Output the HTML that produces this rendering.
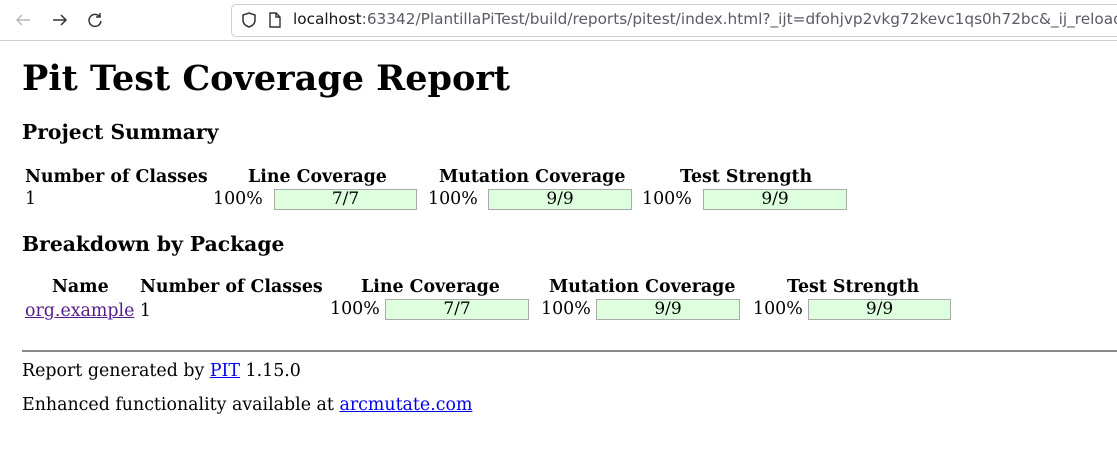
<!DOCTYPE html>
<html><head><style>
html,body{overflow:hidden}
body{margin:0;width:1117px;height:455px;background:#fff;font-family:"DejaVu Serif","Liberation Serif",serif;color:#000;position:relative;overflow:hidden}
.a{position:absolute;white-space:nowrap}
.chrome{position:absolute;left:0;top:0;width:1117px;height:40px;background:#fff;border-bottom:1px solid #cfcfd8;overflow:hidden}
.url{position:absolute;left:231px;top:4px;width:900px;height:31px;border:1px solid #cfcfd8;border-radius:5px;background:#fff}
.ut{position:absolute;left:293px;top:10px;width:824px;overflow:hidden;font-family:"DejaVu Sans","Liberation Sans",sans-serif;font-size:15.3px;color:#5b5b66;white-space:nowrap}
.b{font-weight:bold;font-size:17.4px}
.t{font-size:17.4px}
.bar{position:absolute;height:19px;background:#ddffdd;border:1px solid #aaa;text-align:center;font-size:17px;line-height:19px}
a{color:#0000ee;text-decoration:underline}
</style></head><body>
<div class="chrome">
<svg class="a" style="left:14px;top:11px" width="18" height="18" viewBox="0 0 18 18"><path d="M16 9H3M8 4L3 9l5 5" stroke="#b8b8bd" stroke-width="1.5" fill="none"/></svg>
<svg class="a" style="left:51px;top:11px" width="18" height="18" viewBox="0 0 18 18"><path d="M2 9h13M10 4l5 5-5 5" stroke="#333" stroke-width="1.5" fill="none"/></svg>
<svg class="a" style="left:86px;top:11px" width="18" height="18" viewBox="0 0 18 18"><path d="M14 6A6 6 0 1 0 15 10M14 2v4h-4" stroke="#333" stroke-width="1.5" fill="none"/></svg>
<div class="url"></div>
<svg class="a" style="left:240px;top:11px" width="18" height="18" viewBox="0 0 18 18"><path d="M9 2l6 2v5c0 4-3 6-6 7-3-1-6-3-6-7V4z" stroke="#333" stroke-width="1.5" fill="none"/></svg>
<svg class="a" style="left:266px;top:11px" width="18" height="18" viewBox="0 0 18 18"><path d="M4 2h6l4 4v10H4zM10 2v4h4" stroke="#333" stroke-width="1.4" fill="none"/></svg>
<div class="ut"><span style="color:#15141a">localhost</span>:63342/PlantillaPiTest/build/reports/pitest/index.html?_ijt=dfohjvp2vkg72kevc1qs0h72bc&amp;_ij_reload=RELOAD</div>
</div>
<div class="a" style="left:22px;top:58px;font-size:35px;font-weight:bold">Pit Test Coverage Report</div>
<div class="a" style="left:22px;top:120px;font-size:20.3px;font-weight:bold">Project Summary</div>
<div class="a b" style="left:25px;top:167px">Number of Classes</div>
<div class="a b" style="left:248px;top:167px">Line Coverage</div>
<div class="a b" style="left:439px;top:167px">Mutation Coverage</div>
<div class="a b" style="left:680px;top:167px">Test Strength</div>
<div class="a t" style="left:25px;top:189px">1</div>
<div class="a t" style="left:213px;top:189px">100%</div>
<div class="bar" style="left:274px;top:189px;width:141px">7/7</div>
<div class="a t" style="left:428px;top:189px">100%</div>
<div class="bar" style="left:488px;top:189px;width:142px">9/9</div>
<div class="a t" style="left:642px;top:189px">100%</div>
<div class="bar" style="left:703px;top:189px;width:142px">9/9</div>
<div class="a" style="left:22px;top:232px;font-size:20.3px;font-weight:bold">Breakdown by Package</div>
<div class="a b" style="left:52px;top:277px">Name</div>
<div class="a b" style="left:140px;top:277px">Number of Classes</div>
<div class="a b" style="left:361px;top:277px">Line Coverage</div>
<div class="a b" style="left:549px;top:277px">Mutation Coverage</div>
<div class="a b" style="left:787px;top:277px">Test Strength</div>
<div class="a t" style="left:25px;top:301px"><a style="color:#551a8b">org.example</a> 1</div>
<div class="a t" style="left:330px;top:299px">100%</div>
<div class="bar" style="left:385px;top:299px;width:142px">7/7</div>
<div class="a t" style="left:541px;top:299px">100%</div>
<div class="bar" style="left:596px;top:299px;width:142px">9/9</div>
<div class="a t" style="left:753px;top:299px">100%</div>
<div class="bar" style="left:808px;top:299px;width:141px">9/9</div>
<div class="a" style="left:22px;top:350px;width:1095px;border-top:2px solid #888"></div>
<div class="a t" style="left:22px;top:361px">Report generated by <a>PIT</a> 1.15.0</div>
<div class="a t" style="left:22px;top:395px">Enhanced functionality available at <a>arcmutate.com</a></div>
</body></html>
